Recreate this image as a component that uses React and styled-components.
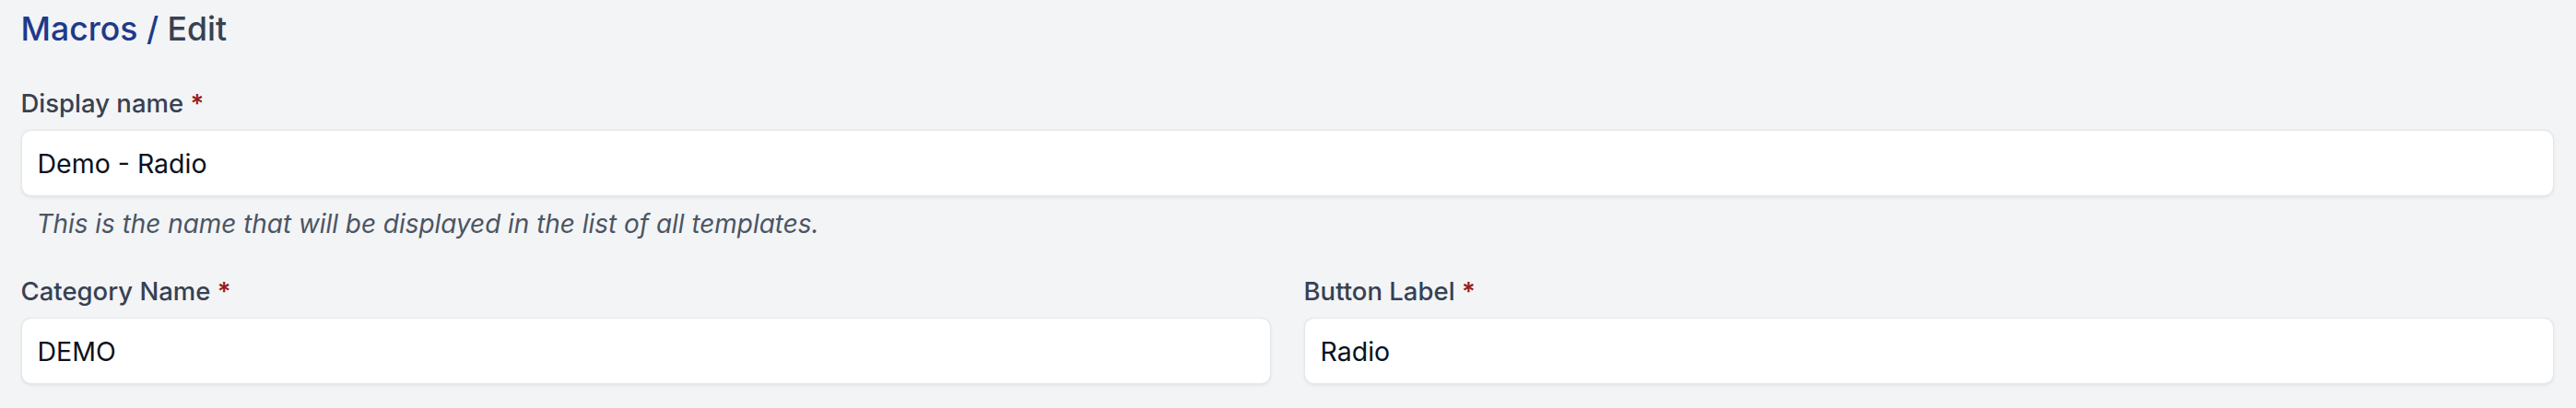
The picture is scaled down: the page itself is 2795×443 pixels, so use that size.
import React from "react";
import styled, { createGlobalStyle } from "styled-components";

const Global = createGlobalStyle`
  html, body { margin: 0; padding: 0; background: #f3f4f6; }
  body { font-family: Inter, "Noto Sans", "Liberation Sans", sans-serif; -webkit-font-smoothing: antialiased; }
  * { box-sizing: border-box; }
`;

const Page = styled.div`
  padding: 7px 24px 0 22.5px;
  background: #f3f4f6;
  min-height: 443px;
`;

const Title = styled.h1`
  margin: 0;
  font-size: 35.6px;
  line-height: 50px;
  font-weight: 500;
  color: #374151;
`;

const Crumb = styled.a`
  color: #1e3a8a;
  text-decoration: none;
`;

const Form = styled.form`
  display: flex;
  flex-direction: column;
  margin-top: 36px;
`;

const Field = styled.div`
  display: flex;
  flex-direction: column;
  min-width: 0;
`;

const Label = styled.label`
  font-size: 27.5px;
  line-height: 38px;
  font-weight: 500;
  color: #374151;
  margin-bottom: 10px;
`;

const Required = styled.span`
  color: #991b1b;
  font-weight: 600;
`;

const Input = styled.input`
  width: 100%;
  height: 72px;
  padding: 0 17px;
  font-family: inherit;
  font-size: 28.5px;
  color: #0b1120;
  background: #ffffff;
  border: 1px solid #e5e7eb;
  border-radius: 10.7px;
  box-shadow: 0 1.8px 3.6px rgba(0, 0, 0, 0.06), 0 0 1px rgba(0, 0, 0, 0.06);
  outline: none;
`;

const Help = styled.p`
  margin: 11px 0 0;
  padding-left: 17px;
  font-size: 27.9px;
  line-height: 38px;
  font-style: italic;
  color: #4b5563;
`;

const Row = styled.div`
  display: grid;
  grid-template-columns: 1fr 1fr;
  gap: 35.6px;
  margin-top: 35px;
`;

function TextField({ id, label, value, help }) {
  return (
    <Field>
      <Label htmlFor={id}>
        {label} <Required>*</Required>
      </Label>
      <Input id={id} defaultValue={value} />
      {help && <Help>{help}</Help>}
    </Field>
  );
}

export default function App() {
  return (
    <Page>
      <Global />
      <Title>
        <Crumb href="#">Macros /</Crumb> Edit
      </Title>
      <Form onSubmit={(e) => e.preventDefault()}>
        <TextField
          id="display"
          label="Display name"
          value="Demo - Radio"
          help="This is the name that will be displayed in the list of all templates."
        />
        <Row>
          <TextField id="category" label="Category Name" value="DEMO" />
          <TextField id="button" label="Button Label" value="Radio" />
        </Row>
      </Form>
    </Page>
  );
}
